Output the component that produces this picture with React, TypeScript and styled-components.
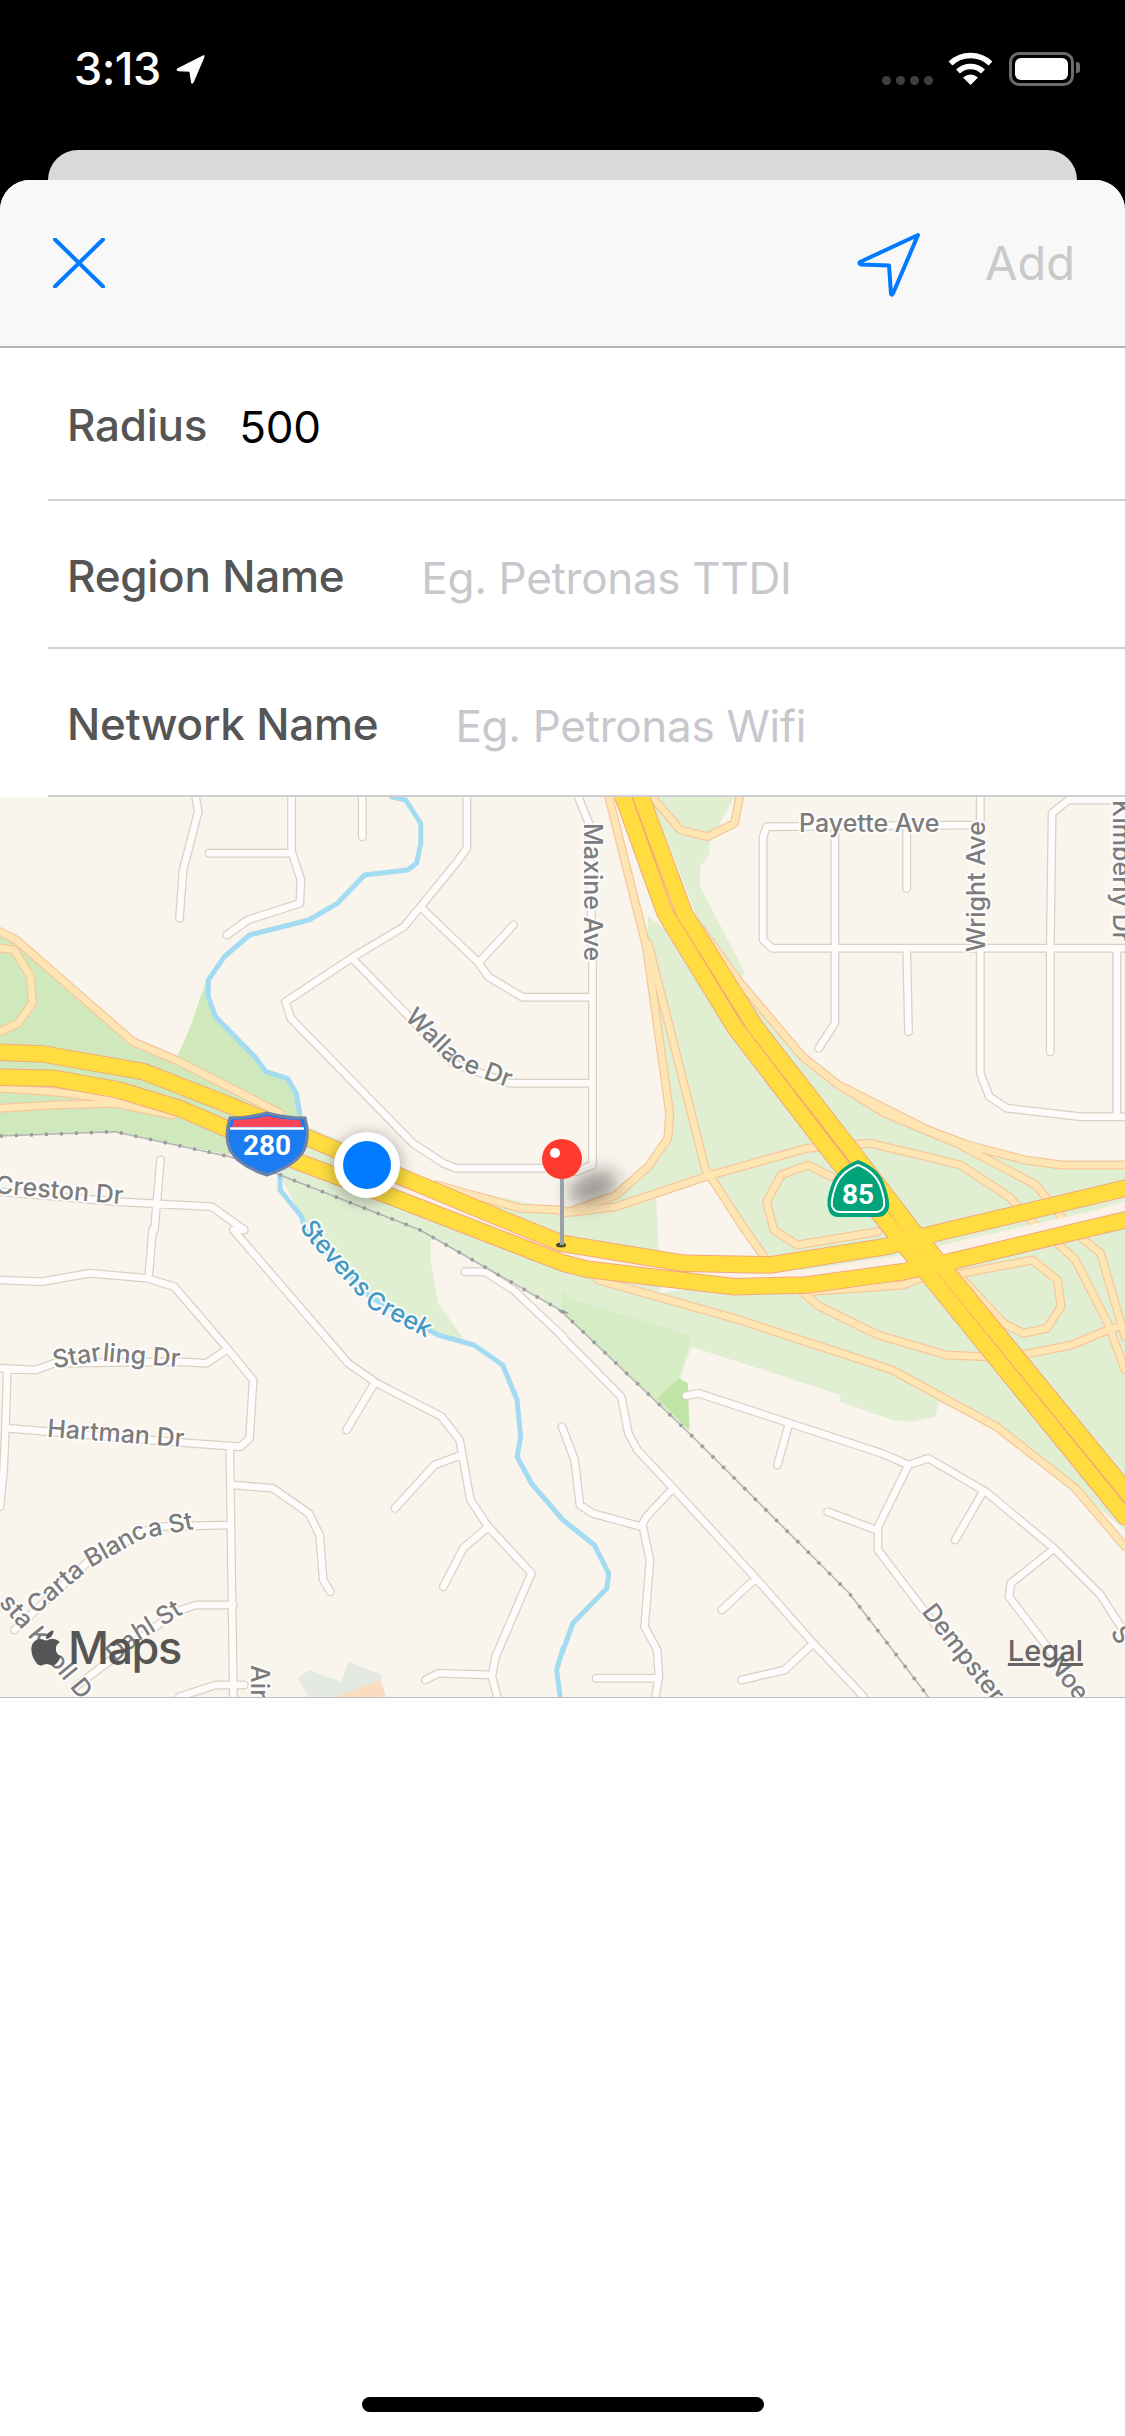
import React, { FC } from 'react';
import styled, { createGlobalStyle } from 'styled-components';
import { FaApple } from 'react-icons/fa';

const UI_FONT = `Inter, 'Noto Sans', 'Liberation Sans', sans-serif`;

const GlobalStyle = createGlobalStyle`
  html, body {
    margin: 0;
    padding: 0;
    background: #000;
  }
  * {
    box-sizing: border-box;
  }
`;

// map geometry was traced from four crops of the reference, each with its own origin
const TILES: Record<string, [number, number]> = {
  A: [0, 780],
  B: [562, 780],
  C: [0, 1230],
  D: [562, 1230]
};

const trace = (spec: string, close = false) => {
  let tile = 'A';
  const points = spec
    .trim()
    .split(/\s+/)
    .map(token => {
      const match = token.match(/^([A-D])?(-?\d+),(-?\d+)$/);
      if (!match) return '';
      if (match[1]) tile = match[1];
      const [ox, oy] = TILES[tile];
      const x = ox + Number(match[2]) / 2.785;
      const y = oy + Number(match[3]) / 3;
      return `${x.toFixed(1)} ${y.toFixed(1)}`;
    });
  return `M${points.join('L')}${close ? 'Z' : ''}`;
};

const traceAll = (specs: string[]) => specs.map(s => trace(s)).join('');

const MINOR_ROADS = traceAll([
  'A545,50 552,95 510,270 500,415',
  'A812,50 812,215 838,300 835,370 690,420 632,465',
  'A812,220 582,220',
  'A1009,50 1009,170',
  'A1300,50 1300,205 1270,250 1175,375 1125,440 985,530 795,665 810,715 1150,1090 1235,1150 1270,1165 1568,1165 B0,1165 40,1175 85,1155 85,540 75,130 45,50',
  'B0,652 85,652',
  'B0,910 85,910',
  'A1175,385 1330,545 1360,590 1455,652 1568,652',
  'A1335,545 1430,435',
  'A985,540 1130,700 1260,850 1420,910 1568,910',
  'A0,1235 330,1265 590,1280 680,1350 C650,0 970,400 1050,460 1230,560 1280,630 1310,810 1360,890 1480,1030 1380,1280 1370,1340 1385,1400',
  'A447,1140 430,1350 C425,0 415,130',
  'C0,150 115,155 250,130 410,145 485,170 625,345 705,450 695,625 670,650 530,640 20,595',
  'C0,415 100,420 150,400 500,395 575,400 630,360',
  'C20,425 15,600 10,720 0,830',
  'C640,655 650,1400',
  'C650,765 760,775 860,850 890,915 900,1050 920,1085',
  'C635,885 430,890 250,990 100,1140 40,1200',
  'C650,1125 545,1125 490,1145 210,1370',
  'C500,1400 600,1365 680,1365',
  'C1040,465 965,600',
  'C1285,675 1210,705 1100,835',
  'C1355,895 1290,955 1235,1070',
  'C1370,1335 1220,1330 1185,1350',
  'C1295,125 1350,125 1430,180 1568,320 D0,320 165,500 185,610 210,660 310,775 540,1045 700,1240 840,1400',
  'D305,780 235,860 220,890 85,850 50,825 35,690 0,590',
  'D225,890 245,990 230,1190 265,1260 270,1340 260,1400',
  'D270,1345 95,1345',
  'D535,1050 445,1140',
  'D695,1245 620,1320 500,1350',
  'D345,497 380,490 890,670 965,705 1020,685 1180,785 1370,955 1500,1095 1568,1210',
  'D630,590 600,705',
  'D965,705 880,890 880,960 1000,1130 1200,1400',
  'D875,900 740,845',
  'D1170,790 1095,930',
  'D1360,965 1250,1060 1245,1100 1400,1320 1440,1400',
  'B1165,50 1165,135 570,140 560,170 560,480 585,505 1568,505',
  'B760,150 760,730 715,805',
  'B960,150 960,325',
  'B960,505 965,755',
  'B1165,505 1165,880 1190,950 1240,985 1445,1010 1568,1010',
  'B1360,505 1360,815',
  'B1360,505 1365,100 1410,60 1568,60',
  'B1545,505 1545,1010'
]);

const ARTERIALS = traceAll([
  'A0,455 45,480 370,785 490,840 690,950 780,1000',
  'A0,505 40,510 85,590 90,670 50,730 0,755',
  'A0,925 150,935 330,960 490,1000',
  'A0,985 150,975 320,970 480,1005',
  'A1215,1215 1450,1285 1568,1290',
  'B130,50 235,500 300,1000 295,1075 240,1160 150,1245 20,1295 0,1300',
  'B240,490 400,1170 420,1200 510,1350 D570,90 710,225 880,315 1070,375 1180,380',
  'B0,1300 150,1280 400,1190 680,1105 860,1090 1110,1155 1245,1250 1330,1350',
  'B250,50 330,150 405,170 480,130 495,50',
  'B390,450 490,600 670,830 770,915 1020,1050 1130,1095 1290,1140 1390,1155 1568,1155',
  'B770,915 900,1000 1100,1090 1320,1215 1420,1350 D1500,70 1568,320',
  'B750,1190 685,1155 610,1185 570,1265 590,1350 D655,45 880,5',
  'D1280,375 1420,345 1520,300 1568,285',
  'D1100,130 1230,280 1285,310 1350,295 1390,230 1380,150 1310,90 1090,135',
  'D100,150 480,265 920,420 1210,590 1430,775 1568,950',
  'D680,185 950,165 1000,145',
  'D1370,30 1430,90 1520,280 1568,420'
]);

const MEDIANS = traceAll([
  'A1100,1218 1350,1330 1568,1420 D0,70 70,85 340,125 480,135 680,135 950,90',
  'D1060,60 1470,-40 1568,-70'
]);

const FREEWAYS = traceAll([
  'A0,817 120,822 400,875 640,976 1392,1314 D0,40 340,100 580,105 900,50 1040,10 1568,-125',
  'A0,892 150,895 330,930 500,985 640,1050 830,1145 1100,1254 1330,1350 1568,1449 D70,118 480,170 680,165 950,125 1080,95 1470,-5 1568,-30',
  'B170,50 287,400 480,740 750,1120 D920,0 1220,400 1568,860',
  'B220,50 341,400 538,740 812,1120 D976,0 1280,400 1630,860'
]);

const WATER = traceAll([
  'A1090,50 1130,60 1172,130 1172,190 1160,250 1135,270 1015,285 940,370 860,420 695,465 625,530 580,600 580,650 600,710 710,830 740,875 800,895 825,940 835,1000',
  'A780,1185 780,1230 840,1310 C850,0 1030,200 1220,315 1320,345 1400,405 1440,510 1450,620 1440,680 1480,760 1568,870 D90,945 130,1030 125,1075 30,1180 0,1270',
  'C1568,1255 1550,1320 1560,1400'
]);

const RAIL = trace(
  'A0,1068 320,1055 640,1130 780,1185 C1170,0 1568,245 D0,245 350,605 480,745 800,1090 1020,1400'
);

const PARK_LIGHT = [
  trace('B245,50 480,50 410,190 410,225 385,260 385,320 510,580 490,600 390,450', true),
  trace(
    'B240,410 490,600 670,830 770,915 1020,1050 1290,1140 1568,1170 D1568,900 1430,775 1210,590 1050,515 1040,560 975,575 920,570 775,515 775,495 360,350 330,440 350,600 0,250 C1568,250 1170,0 A1200,1350 780,1185 860,1040 1230,1215 1568,1290 B20,1295 150,1245 240,1160 295,1075 300,1000 235,500',
    true
  ),
  trace('A780,1185 1200,1350 C1200,0 1200,100 1220,220 1290,325 1210,315 1030,200 850,0 A840,1310', true),
  trace('B0,1300 265,1250 270,1350 D275,190 0,180 A1568,1449', true)
];

const PARK_DARK = [
  trace('A0,450 50,475 370,785 490,838 530,740 575,600 600,710 710,830 740,875 800,895 835,990 860,1040 650,1000 0,850', true),
  trace('A0,840 650,1000 640,1125 320,1055 0,1068', true)
];

const LOT = trace('B262,1245 405,1195 430,1230 510,1350 D630,130 275,190', true);
const PLOT = trace('D0,180 20,205 360,318 325,445 350,460 350,600 0,250', true);
const PLOT_SMALL = trace('D325,445 350,460 355,600 265,505', true);
const CAMPUS = trace('C830,1345 860,1320 950,1355 970,1295 1065,1335 1050,1400 860,1400', true);
const CAMPUS_ROOF = trace('C935,1400 1060,1350 1075,1400', true);

const STEVENS_PATH = trace('A835,1335 C850,20 1030,235 1225,345');
const CARTA_PATH = trace('C100,1155 250,1015 400,925 550,895');
const WALLACE_PATH = trace('A1125,715 1260,860 1420,925');
const DAHL_PATH = trace('C320,1300 400,1225 505,1155');
const KNOLL_PATH = trace('C-5,1120 90,1235 230,1420');
const STARLING_PATH = trace('C150,415 280,392 420,405 510,412');
const CRESTON_PATH = trace('A-15,1240 340,1272');
const HARTMAN_PATH = trace('C130,620 520,652');

const Screen = styled.div`
  display: flex;
  flex-direction: column;
  width: 1125px;
  height: 2436px;
  overflow: hidden;
  background: #000;
  font-family: ${UI_FONT};
`;

const StatusBar = styled.div`
  display: flex;
  justify-content: space-between;
  align-items: flex-start;
  height: 150px;
  padding: 45px 51px 0 74px;
  flex: none;
`;

const TimeGroup = styled.div`
  display: flex;
  align-items: center;
  gap: 13px;
`;

const Time = styled.span`
  color: #fff;
  font-size: 45px;
  line-height: 48px;
  font-weight: 500;
  letter-spacing: -0.5px;
`;

const StatusIcons = styled.div`
  display: flex;
  align-items: flex-start;
  padding-top: 7px;
`;

const SignalDots = styled.div`
  display: flex;
  gap: 5px;
  margin: 24px 15px 0 0;
`;

const SignalDot = styled.span`
  width: 9px;
  height: 9px;
  border-radius: 50%;
  background: #3f3f3f;
`;

const Battery = styled.div`
  position: relative;
  width: 65px;
  height: 34px;
  margin-left: 16px;
  padding: 3px;
  border: 3px solid #6b6b6b;
  border-radius: 10px;

  &::before {
    content: '';
    display: block;
    height: 100%;
    border-radius: 6px;
    background: #fff;
  }

  &::after {
    content: '';
    position: absolute;
    top: 7px;
    right: -9px;
    width: 4px;
    height: 11px;
    border-radius: 0 3px 3px 0;
    background: #6b6b6b;
  }
`;

const BackCard = styled.div`
  flex: none;
  height: 30px;
  margin: 0 48px;
  border-radius: 30px 30px 0 0;
  background: #d9d9d9;
`;

const Sheet = styled.div`
  display: flex;
  flex-direction: column;
  flex: 1;
  background: #fff;
  border-radius: 30px 30px 0 0;
  overflow: hidden;
`;

const NavBar = styled.div`
  display: flex;
  align-items: center;
  justify-content: space-between;
  flex: none;
  height: 168px;
  padding: 0 50px 0 53px;
  background: #f8f8f8;
  border-bottom: 2px solid #b4b4b4;
`;

const NavActions = styled.div`
  display: flex;
  align-items: center;
  gap: 64px;
`;

const LocateIcon = styled.svg`
  margin-top: 3px;
`;

const AddButton = styled.span`
  color: #c9c9c9;
  font-size: 47px;
  line-height: 56px;
`;

const Form = styled.div`
  flex: none;
  padding-left: 48px;
`;

const Row = styled.div<{ $height: number }>`
  display: flex;
  align-items: center;
  height: ${p => p.$height}px;
  padding: 3px 0 0 19px;
  border-bottom: 2px solid #cfcfd2;
  font-size: 44px;
`;

const Label = styled.span<{ $gap: number }>`
  margin-right: ${p => p.$gap}px;
  color: #555;
  font-weight: 500;
  letter-spacing: -0.25px;
`;

const Value = styled.span`
  color: #000;
  letter-spacing: -0.3px;
  margin-top: 4px;
`;

const Placeholder = styled.span`
  color: #c7c7cd;
  letter-spacing: -0.3px;
  margin-top: 4px;
`;

const MapPanel = styled.div`
  position: relative;
  flex: none;
  height: 901px;
  overflow: hidden;
  background: #f9f4ec;
  border-bottom: 1px solid #bdbdbd;

  svg.map {
    display: block;
  }
`;

const Stroke = styled.path<{ $color: string; $width: number }>`
  fill: none;
  stroke: ${p => p.$color};
  stroke-width: ${p => p.$width}px;
  stroke-linejoin: round;
  stroke-linecap: round;
`;

const Area = styled.path<{ $color: string }>`
  fill: ${p => p.$color};
`;

const StreetName = styled.text<{ $color?: string }>`
  font-family: ${UI_FONT};
  font-size: 25px;
  font-weight: 500;
  fill: ${p => p.$color || '#7c7c7c'};
  stroke: rgba(255, 255, 255, 0.85);
  stroke-width: 4px;
  paint-order: stroke;
  stroke-linejoin: round;
`;

const ShieldNumber = styled.text`
  font-family: Roboto, 'Liberation Sans', sans-serif;
  font-size: 28px;
  font-weight: 700;
  fill: #fff;
  text-anchor: middle;
`;

const MapsLogo = styled.div`
  position: absolute;
  left: 26px;
  bottom: 24px;
  display: flex;
  align-items: center;
  gap: 2px;
  color: #555;
  font-size: 45px;
  line-height: 50px;
  font-weight: 500;
  letter-spacing: -1.5px;
`;

const LegalLink = styled.span`
  position: absolute;
  right: 42px;
  bottom: 30px;
  color: #666;
  font-size: 29px;
  line-height: 32px;
  font-weight: 500;
  text-decoration: underline;
  text-decoration-thickness: 3px;
`;

const HomeIndicator = styled.div`
  width: 402px;
  height: 15px;
  margin: auto auto 24px;
  border-radius: 8px;
  background: #000;
`;

const CurvedName: FC<{ id: string; d: string; color?: string; children: string }> = ({
  id,
  d,
  color,
  children
}) => (
  <>
    <path id={id} d={d} fill="none" />
    <StreetName $color={color}>
      <textPath href={`#${id}`}>{children}</textPath>
    </StreetName>
  </>
);

const MapDrawing: FC = () => (
  <svg className="map" width="1125" height="900" viewBox="0 797 1125 900">
    <defs>
      <filter id="soft" x="-60%" y="-60%" width="220%" height="220%">
        <feGaussianBlur stdDeviation="7" />
      </filter>
      <filter id="softer" x="-80%" y="-80%" width="260%" height="260%">
        <feGaussianBlur stdDeviation="9" />
      </filter>
    </defs>

    {PARK_LIGHT.map(d => (
      <Area key={d} d={d} $color="#e0efd1" />
    ))}
    {PARK_DARK.map(d => (
      <Area key={d} d={d} $color="#cfe9bd" />
    ))}
    <Area d={LOT} $color="#f9f4ec" />
    <Area d={PLOT} $color="#d6ecc5" />
    <Area d={PLOT_SMALL} $color="#c0e3a6" />
    <Area d={CAMPUS} $color="#e4e9e1" />
    <Area d={CAMPUS_ROOF} $color="#fbdcc0" />

    <Stroke d={WATER} $color="#a3dbf2" $width={5} />

    <Stroke d={MINOR_ROADS} $color="#d9d1c5" $width={9} />
    <Stroke d={MINOR_ROADS} $color="#fdfcfa" $width={6.5} />

    <Stroke d={RAIL} $color="#b4b4b4" $width={1.5} />
    <path d={RAIL} fill="none" stroke="#9c9c9c" strokeWidth="3.5" strokeDasharray="3 12" />

    <Stroke d={ARTERIALS} $color="#f6c79d" $width={9} />
    <Stroke d={ARTERIALS} $color="#fee5b4" $width={6.5} />

    <Stroke d={MEDIANS} $color="#fbf1e8" $width={10} />
    <Stroke d={FREEWAYS} $color="#f3a77c" $width={17.5} />
    <Stroke d={FREEWAYS} $color="#ffdd40" $width={15.5} />

    <StreetName x="799" y="832">Payette Ave</StreetName>
    <StreetName transform="translate(584 823) rotate(90)">Maxine Ave</StreetName>
    <StreetName transform="translate(985 952) rotate(-90)">Wright Ave</StreetName>
    <StreetName transform="translate(1113 800) rotate(90)">Kimberly Dr</StreetName>
    <StreetName transform="translate(921 1612) rotate(52)">Dempster</StreetName>
    <StreetName transform="translate(1047 1664) rotate(52)">Noe</StreetName>
    <StreetName transform="translate(1110 1632) rotate(60)">S</StreetName>
    <StreetName transform="translate(251 1665) rotate(90)">Air</StreetName>
    <CurvedName id="wallace" d={WALLACE_PATH}>Wallace Dr</CurvedName>
    <CurvedName id="creston" d={CRESTON_PATH}>Creston Dr</CurvedName>
    <CurvedName id="starling" d={STARLING_PATH}>Starling Dr</CurvedName>
    <CurvedName id="hartman" d={HARTMAN_PATH}>Hartman Dr</CurvedName>
    <CurvedName id="carta" d={CARTA_PATH}>Carta Blanca St</CurvedName>
    <CurvedName id="dahl" d={DAHL_PATH}>Dahl St</CurvedName>
    <CurvedName id="knoll" d={KNOLL_PATH}>sta Knoll Dr</CurvedName>
    <CurvedName id="stevens" d={STEVENS_PATH} color="#4498c4">Stevens Creek</CurvedName>

    {/* interstate shield */}
    <path
      d="M230 1118 Q248 1118 267 1113 Q286 1118 305 1118 Q310 1136 304 1150 Q295 1166 267 1175 Q239 1166 230 1150 Q224 1136 230 1118Z"
      fill="#1b7bf0"
      stroke="#6d82ab"
      strokeWidth="3"
    />
    <path d="M234 1120 Q250 1120 267 1116 Q284 1120 300 1120 L302 1127 L232 1127Z" fill="#fb4658" />
    <path d="M230 1128.5 H304" stroke="#fff" strokeWidth="2.5" />
    <ShieldNumber x="267" y="1155">280</ShieldNumber>

    {/* state route shield */}
    <path
      d="M858 1160 Q880 1168 885 1186 Q890 1200 889 1208 Q886 1217 878 1217 H838 Q830 1217 828 1208 Q826 1200 831 1186 Q837 1168 858 1160Z"
      fill="#00a37a"
    />
    <path
      d="M858 1165 Q876 1172 881 1188 Q885 1200 884 1206 Q882 1212 876 1212 H840 Q834 1212 832 1206 Q831 1200 835 1188 Q840 1172 858 1165Z"
      fill="none"
      stroke="#fff"
      strokeWidth="2"
    />
    <ShieldNumber x="858" y="1204">85</ShieldNumber>

    {/* current location */}
    <circle cx="367" cy="1168" r="36" fill="rgba(0,0,0,0.25)" filter="url(#soft)" />
    <circle cx="367" cy="1165" r="33" fill="#fff" />
    <circle cx="367" cy="1165" r="24" fill="#007aff" />

    {/* pin */}
    <ellipse
      cx="593"
      cy="1188"
      rx="26"
      ry="15"
      fill="rgba(40,40,40,0.45)"
      transform="rotate(-22 593 1188)"
      filter="url(#softer)"
    />
    <ellipse cx="561" cy="1245" rx="5" ry="2.5" fill="#4a4a30" />
    <rect x="560" y="1175" width="4" height="70" fill="#9ba1a9" />
    <circle cx="562" cy="1159" r="20" fill="#ff3b30" />
    <circle cx="555" cy="1153" r="5" fill="#fff" />
  </svg>
);

const App: FC = () => (
  <Screen>
    <GlobalStyle />
    <StatusBar>
      <TimeGroup>
        <Time>3:13</Time>
        <svg width="32" height="32" viewBox="0 0 30 30">
          <path
            d="M27.5 2 L3 14.5 Q1.5 16.5 4 17 L14.5 17.5 L16 28 Q17 30 18.5 27.5 L28.5 4 Q29 1.5 27.5 2Z"
            fill="#fff"
          />
        </svg>
      </TimeGroup>
      <StatusIcons>
        <SignalDots>
          <SignalDot />
          <SignalDot />
          <SignalDot />
          <SignalDot />
        </SignalDots>
        <svg width="45" height="33" viewBox="0 0 45 33">
          <path d="M2.5 11.5 A29 29 0 0 1 42.5 11.5" fill="none" stroke="#fff" strokeWidth="5.5" />
          <path d="M10 19.5 A18 18 0 0 1 35 19.5" fill="none" stroke="#fff" strokeWidth="5.5" />
          <path d="M22.5 33 L15 25.5 Q22.5 19.5 30 25.5Z" fill="#fff" />
        </svg>
        <Battery />
      </StatusIcons>
    </StatusBar>
    <BackCard />
    <Sheet>
      <NavBar>
        <svg width="52" height="50" viewBox="0 0 52 50">
          <path d="M2 1.5 L50 48.5 M50 1.5 L2 48.5" stroke="#007aff" strokeWidth="4" strokeLinecap="round" />
        </svg>
        <NavActions>
          <LocateIcon width="64" height="64" viewBox="0 0 64 64">
            <path
              d="M61 2 L3 29 Q1.5 31 4 31.5 L32 32.5 L34 60.5 Q34.5 63 36 60.5Z"
              fill="none"
              stroke="#007aff"
              strokeWidth="4"
              strokeLinejoin="round"
            />
          </LocateIcon>
          <AddButton>Add</AddButton>
        </NavActions>
      </NavBar>
      <Form>
        <Row $height={153}>
          <Label $gap={32}>Radius</Label>
          <Value>500</Value>
        </Row>
        <Row $height={148}>
          <Label $gap={77}>Region Name</Label>
          <Placeholder>Eg. Petronas TTDI</Placeholder>
        </Row>
        <Row $height={148}>
          <Label $gap={77}>Network Name</Label>
          <Placeholder>Eg. Petronas Wifi</Placeholder>
        </Row>
      </Form>
      <MapPanel>
        <MapDrawing />
        <MapsLogo>
          <FaApple size={40} />
          Maps
        </MapsLogo>
        <LegalLink>Legal</LegalLink>
      </MapPanel>
      <HomeIndicator />
    </Sheet>
  </Screen>
);

export default App;
